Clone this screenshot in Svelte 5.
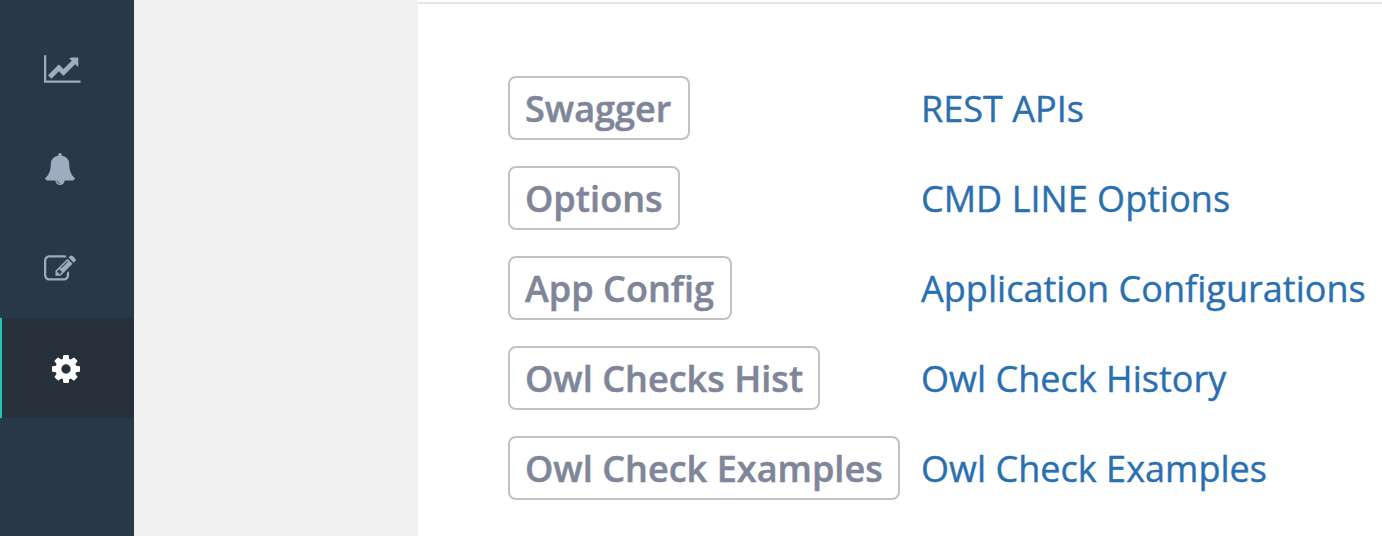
<script>
  const rows = [
    ['Swagger', 'REST APIs', 182],
    ['Options', 'CMD LINE Options', 172],
    ['App Config', 'Application Configurations', 224],
    ['Owl Checks Hist', 'Owl Check History', 312],
    ['Owl Check Examples', 'Owl Check Examples', 392]
  ];
</script>

<div class="page">
  <nav class="sidebar">
    <a class="item" href="#charts" aria-label="Charts">
      <svg class="chart" viewBox="0 0 2048 1792"><path d="M2048 1536v128H0V128h128v1408h1920zM1920 288v435q0 21-19.500 29.500T1865 745l-121-121-633 633q-10 10-23 10t-23-10l-233-233-416 416-192-192 585-585q10-10 23-10t23 10l233 233 464-464-121-121q-16-16-7.500-35.500T1581 256h307q14 0 23 9t9 23z" /></svg>
    </a>
    <a class="item" href="#alerts" aria-label="Alerts">
      <svg class="bell" viewBox="0 0 1792 1792"><path fill-rule="evenodd" d="M912 1696q0-16-16-16-59 0-101.500-42.500T752 1536q0-16-16-16t-16 16q0 73 51.500 124.500T896 1712q16 0 16-16zM1728 1408q0 52-38 90t-90 38h-448q0 106-75 181t-181 75-181-75-75-181H192q-52 0-90-38t-38-90q50-42 91-88t85-119.500 74.500-158.500 50-206T384 576q0-152 117-282.500T808 135q-8-19-8-39 0-40 28-68t68-28 68 28 28 68q0 20-8 39 190 28 307 158.500T1408 576q0 139 19.500 260t50 206 74.500 158.500 85 119.500 91 88z" /></svg>
    </a>
    <a class="item" href="#edit" aria-label="Edit">
      <svg class="edit" viewBox="0 0 1792 1792"><path fill-rule="evenodd" d="M888 1184l116-116-152-152-116 116v56h96v96h56zM1328 464q-16-16-33 1L945 815q-17 17-1 33t33-1l350-350q17-17 1-33zM1408 1058v190q0 119-84.500 203.500T1120 1536H288q-119 0-203.500-84.500T0 1248V416q0-119 84.500-203.500T288 128h832q63 0 117 25 15 7 18 23 3 17-9 29l-49 49q-14 14-32 8-23-6-45-6H288q-66 0-113 47t-47 113v832q0 66 47 113t113 47h832q66 0 113-47t47-113v-126q0-13 9-22l64-64q15-15 35-7t20 29zM1312 320l288 288-672 672H640V992zM1756 452l-92 92-288-288 92-92q28-28 68-28t68 28l152 152q28 28 28 68t-28 68z" /></svg>
    </a>
    <a class="item active" href="#settings" aria-label="Settings">
      <svg class="gear" viewBox="0 0 1536 1536"><path fill-rule="evenodd" d="M1024 768q0-106-75-181t-181-75-181 75-75 181 75 181 181 75 181-75 75-181zM1536 659v222q0 12-8 23t-20 13l-185 28q-19 54-39 91 35 50 107 138 10 12 10 25t-9 23q-27 37-99 108t-94 71q-12 0-26-9l-138-108q-44 23-91 38-16 136-29 186-7 28-36 28H657q-14 0-24.500-8.500T621 1506l-28-184q-49-16-90-37l-141 107q-10 9-25 9-14 0-25-11-126-114-165-168-7-10-7-23 0-12 8-23 15-21 51-66.500t54-70.500q-27-50-41-99L29 913q-13-2-21-12.500T0 877V655q0-12 8-23t19-13l186-28q14-46 39-92-40-57-107-138-10-12-10-24 0-10 9-23 26-36 98.500-107.500T337 135q13 0 26 10l138 107q44-23 91-38 16-136 29-186 7-28 36-28h222q14 0 24.500 8.500T915 30l28 184q49 16 90 37l142-107q9-9 24-9 13 0 25 10 129 119 165 170 7 8 7 22 0 12-8 23-15 21-51 66.500t-54 70.500q26 50 41 98l183 28q13 2 21 12.500t8 23.500z" /></svg>
    </a>
  </nav>
  <aside></aside>
  <main>
    <ul>
      {#each rows as [label, link, width]}
        <li>
          <span class="cell"><button style:width={`${width}px`}>{label}</button></span>
          <a href="#open">{link}</a>
        </li>
      {/each}
    </ul>
  </main>
</div>

<style>
  .page {
    display: flex;
    height: 536px;
    overflow: hidden;
    font-family: "Open Sans", sans-serif;
    background: #fff;
  }
  .sidebar {
    width: 134px;
    flex: none;
    box-sizing: border-box;
    padding-top: 18px;
    background: #293846;
  }
  .item {
    display: block;
    box-sizing: border-box;
    height: 100px;
    padding: 34px 0 0 44px;
    color: #9fabbf;
  }
  .item.active {
    border-left: 2px solid #23c6b3;
    padding: 36.5px 0 0 49.700px;
    background: #25303b;
    color: #fff;
  }
  svg { display: block; fill: currentColor; }
  .chart { width: 36.600px; height: 32px; margin-top: 0.500px; }
  .bell { width: 32px; height: 32px; margin-top: 0.700px; }
  .edit { width: 32px; height: 32px; margin-top: 0.500px; }
  .gear { width: 28px; height: 28px; }
  aside { width: 284px; flex: none; background: #f0f0f0; }
  main {
    flex: 1;
    box-sizing: border-box;
    border-top: 2px solid #e2e7eb;
    margin-top: 2px;
    padding: 72px 0 0 90px;
  }
  ul { list-style: none; margin: 0; padding: 0; display: grid; gap: 26px; }
  li { display: flex; align-items: center; height: 64px; white-space: nowrap; }
  .cell { width: 413px; flex: none; display: flex; }
  button {
    box-sizing: border-box;
    height: 64px;
    padding: 2px 0 0 15px;
    border: 2px solid #c2c2c2;
    border-radius: 8px;
    background: #fff;
    color: #7f8699;
    font: 600 36px/58px "Open Sans", sans-serif;
    letter-spacing: 0.030px;
    text-align: left;
    -webkit-text-stroke: 0.500px currentColor;
  }
  li a {
    padding-top: 2px;
    color: #2a70b0;
    font-size: 36px;
    line-height: 60px;
    letter-spacing: 0.030px;
    text-decoration: none;
    -webkit-text-stroke: 0.400px currentColor;
  }
</style>
